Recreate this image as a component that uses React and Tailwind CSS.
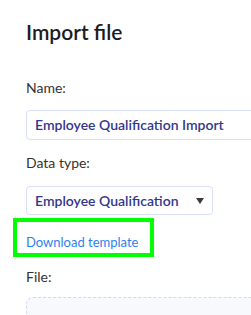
export default function App() {
  return (
    <div className="h-[315px] w-[251px] overflow-hidden bg-white pl-[26px] font-['Lato','Liberation_Sans',sans-serif]">
      <h1 className="mt-[20px] text-[21px] leading-[24px] font-semibold text-[#1c1c1c]">Import file</h1>

      <div className="mt-[34px] text-[14px] leading-[20px] text-[#333]">Name:</div>
      <div className="mt-[12px] flex h-[30px] w-[260px] items-center rounded-[4px] border border-[#d9e1fa] px-[8px]">
        <span className="whitespace-nowrap text-[14px] leading-[18px] font-semibold text-[#33378c]">
          Employee Qualification Import
        </span>
      </div>

      <div className="mt-[13px] text-[14px] leading-[20px] text-[#333]">Data type:</div>
      <div className="mt-[13px] flex h-[29px] w-[187px] items-center justify-between rounded-[4px] border border-[#d9e1fa] pr-[8px] pl-[8px]">
        <span className="whitespace-nowrap text-[14px] leading-[18px] font-semibold text-[#33378c]">
          Employee Qualification
        </span>
        <svg width="8" height="6" viewBox="0 0 8 6" className="mt-[1px]">
          <path d="M0 0h8L4 6z" fill="#3a3a3a" />
        </svg>
      </div>

      <div className="mt-[3px] ml-[-13px] h-[39px] w-[141px] border-4 border-[#00ff00] pt-[7px] pl-[9px]">
        <span className="text-[13px] leading-[16px] text-[#2f80ed]">Download template</span>
      </div>

      <div className="mt-[10px] text-[14px] leading-[20px] text-[#333]">File:</div>
      <div className="mt-[10px] h-[80px] w-[260px] rounded-[7px] border border-dashed border-[#cfdaf5] bg-[#f8f9fc]" />
    </div>
  );
}
